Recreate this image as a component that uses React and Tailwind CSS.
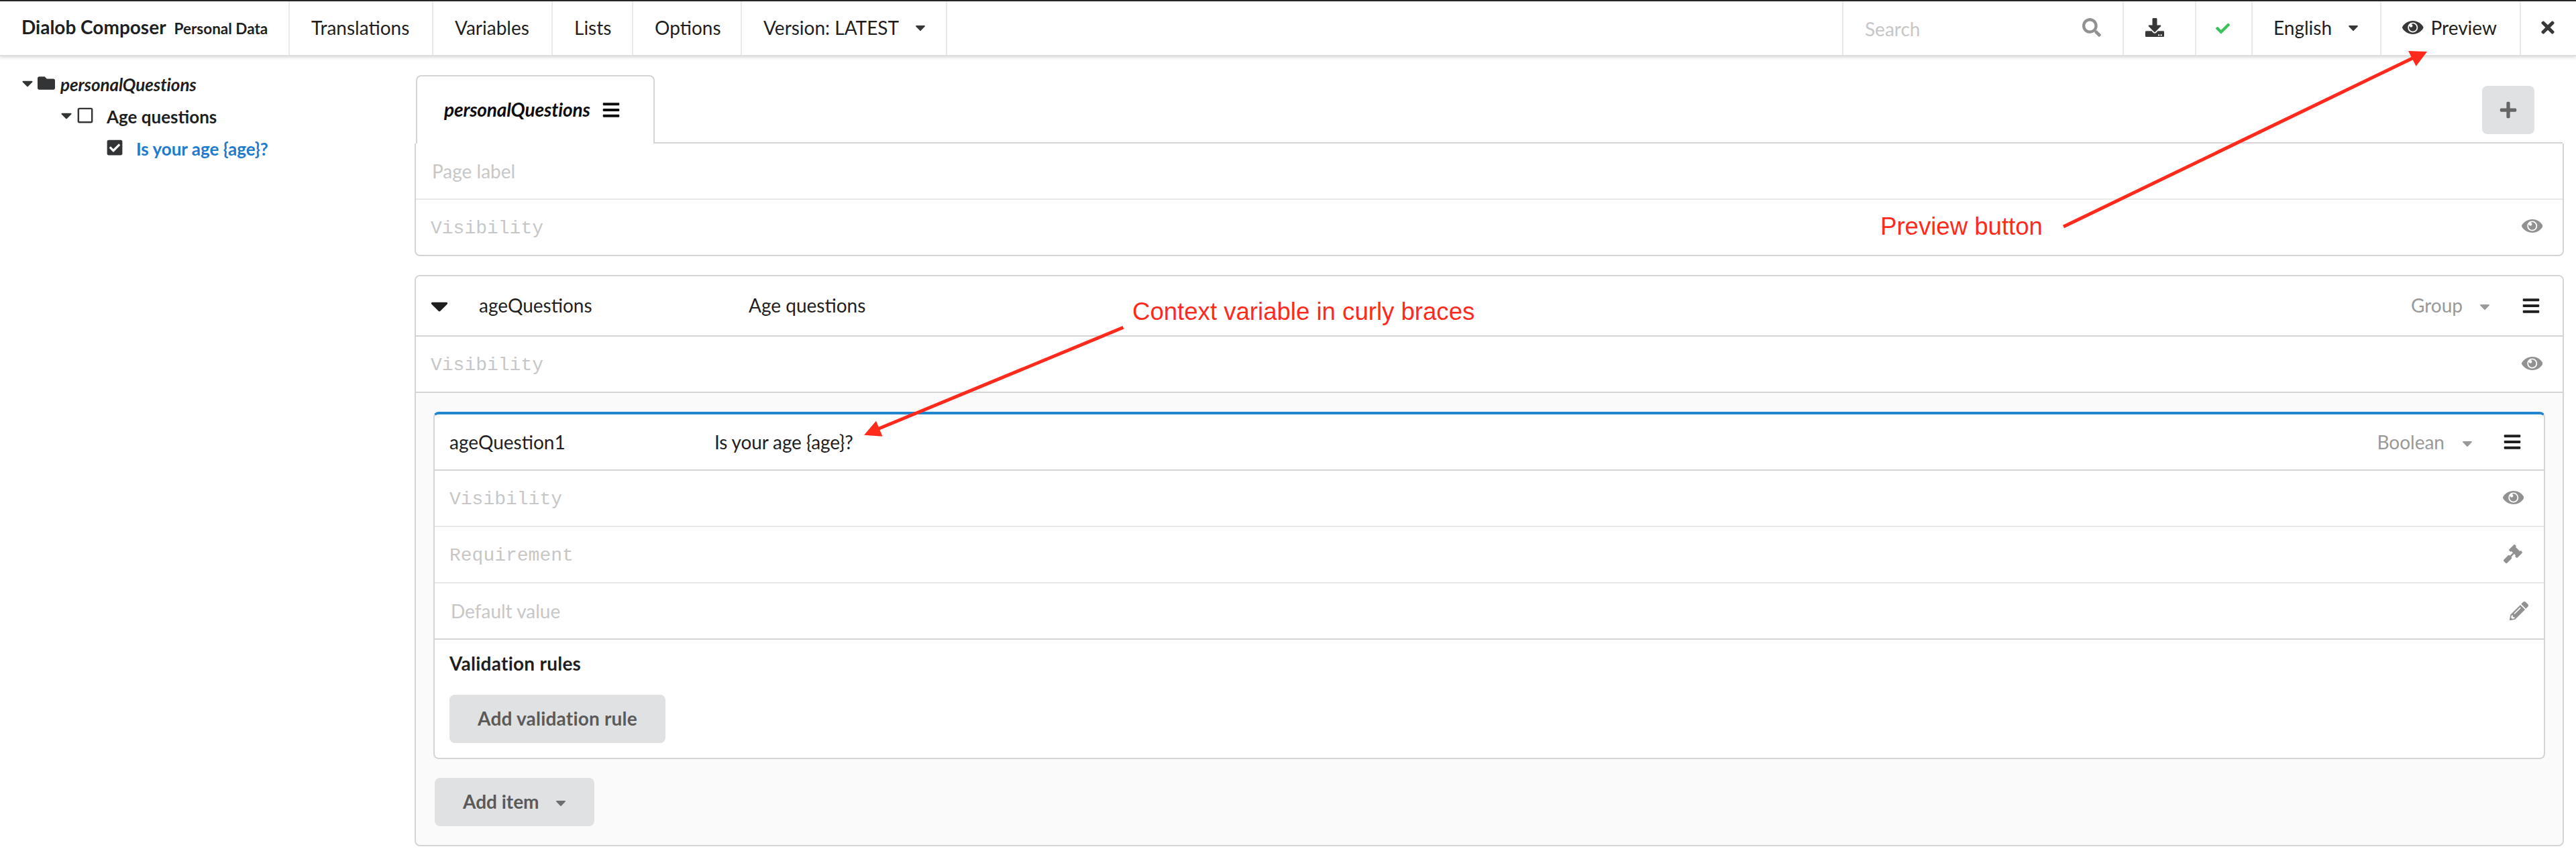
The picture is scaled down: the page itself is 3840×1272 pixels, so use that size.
import React from "react";
import {
  FaBars,
  FaCaretDown,
  FaCheck,
  FaCheckSquare,
  FaDownload,
  FaFolder,
  FaGavel,
  FaPencilAlt,
  FaPlus,
  FaRegSquare,
  FaSearch,
  FaTimes,
} from "react-icons/fa";

function Eye({ className = "" }) {
  return (
    <svg viewBox="0 0 576 512" fill="currentColor" className={`h-7 w-[31.5px] shrink-0 ${className}`}>
      <path d="M569.354 231.631C512.969 135.949 407.81 72 288 72 168.14 72 63.004 135.994 6.646 231.631a47.999 47.999 0 0 0 0 48.739C63.031 376.051 168.19 440 288 440c119.86 0 224.996-63.994 281.354-159.631a47.997 47.997 0 0 0 0-48.738zM288 392c-75.162 0-136-60.827-136-136 0-75.162 60.826-136 136-136 75.162 0 136 60.826 136 136 0 75.162-60.826 136-136 136zm104-136c0 57.438-46.562 104-104 104s-104-46.562-104-104c0-17.708 4.431-34.379 12.236-48.973l-.001.032c0 23.651 19.173 42.823 42.824 42.823s42.824-19.173 42.824-42.823c0-23.651-19.173-42.824-42.824-42.824l-.032.001C253.621 156.431 270.292 152 288 152c57.438 0 104 46.562 104 104z" />
    </svg>
  );
}

function MenuBar() {
  return (
    <header className="flex h-[84px] shrink-0 items-stretch border-t-2 border-b-2 border-t-[#272526] border-b-[#dededf] bg-white shadow-[0_2px_4px_0_rgba(34,36,38,0.15)]">
      <div className="flex w-[432px] items-center border-r-2 border-[#e9e9e9] pb-[2px] pl-8">
        <div className="flex items-baseline gap-3 font-bold whitespace-nowrap">
          <span>Dialob Composer</span>
          <span className="text-[22.5px]">Personal Data</span>
        </div>
      </div>
      <div className="flex w-[214px] items-center border-r-2 border-[#e9e9e9] pb-[2px] pl-8">Translations</div>
      <div className="flex w-[178px] items-center border-r-2 border-[#e9e9e9] pb-[2px] pl-8">Variables</div>
      <div className="flex w-[120px] items-center border-r-2 border-[#e9e9e9] pb-[2px] pl-8">Lists</div>
      <div className="flex w-[162px] items-center border-r-2 border-[#e9e9e9] pb-[2px] pl-8">Options</div>
      <div className="flex w-[306px] items-center justify-between border-r-2 border-[#e9e9e9] pr-[26px] pb-[2px] pl-8">
        Version: LATEST
        <FaCaretDown className="size-6 text-[#383838]" />
      </div>
      <div className="ml-auto flex w-[418px] items-center justify-between border-l-2 border-[#e9e9e9] pr-[32px] pb-[2px] pl-8">
        <span className="pt-1 text-[#c7c7c7]">Search</span>
        <FaSearch className="size-7 text-[#919191]" />
      </div>
      <div className="flex w-[108px] items-center border-l-2 border-[#e9e9e9] pb-[2px] pl-8">
        <FaDownload className="size-7 text-[#383838]" />
      </div>
      <div className="flex w-[84px] items-center border-l-2 border-[#e9e9e9] pl-[29px]">
        <FaCheck className="size-[21px] text-[#3ac25a]" />
      </div>
      <div className="flex w-[192px] items-center justify-between border-l-2 border-[#e9e9e9] pr-[28px] pb-[2px] pl-[31px]">
        English
        <FaCaretDown className="size-6 text-[#383838]" />
      </div>
      <div className="flex w-[208px] items-center gap-[11px] border-l-2 border-[#e9e9e9] pb-[2px] pl-[31px]">
        <Eye className="text-[#383838]" />
        Preview
      </div>
      <div className="flex w-[84px] items-center border-l-2 border-[#e9e9e9] pb-[2px] pl-[26px]">
        <FaTimes className="size-7 text-[#383838]" />
      </div>
    </header>
  );
}

function Tree() {
  return (
    <nav className="flex w-[618px] shrink-0 flex-col pt-4 text-[26px] font-bold">
      <div className="flex h-12 items-center pl-[28px]">
        <FaCaretDown className="size-[26px] text-[#333436]" />
        <FaFolder className="ml-[2px] size-[26px] text-[#333436]" />
        <span className="pt-1 pl-2 tracking-[-0.1px] italic">personalQuestions</span>
      </div>
      <div className="flex h-12 items-center pl-[86px]">
        <FaCaretDown className="size-[26px] text-[#333436]" />
        <FaRegSquare className="ml-[1.5px] size-[26px] text-[#333436]" />
        <span className="pt-1 pl-[19.5px]">Age questions</span>
      </div>
      <div className="flex h-12 items-center pl-[158px]">
        <FaCheckSquare className="size-[26px] text-[#333436]" />
        <span className="pt-1 pl-[19px] text-[#1f7bcd]">{"Is your age {age}?"}</span>
      </div>
    </nav>
  );
}

function FieldRow({ label, mono, icon, className = "" }) {
  return (
    <div className={`flex shrink-0 items-center justify-between text-[#c7c7c7] ${className}`}>
      <span className={mono ? "pt-1 font-['Liberation_Mono',monospace]" : "pl-[2px]"}>{label}</span>
      {icon}
    </div>
  );
}

function PageTabs() {
  return (
    <div className="mx-[2px] flex h-[102px]">
      <div className="flex w-[356px] items-center gap-[17px] rounded-t-lg border-2 border-b-0 border-[#d4d4d5] bg-white pl-10">
        <span className="pb-[2px] font-bold tracking-[-0.15px] text-[#0d0d0d] italic">personalQuestions</span>
        <FaBars className="size-7 text-[#0d0d0d]" />
      </div>
      <div className="flex flex-1 items-start justify-end border-b-2 border-[#d4d4d5] pt-4 pr-[42px]">
        <button className="flex h-[72px] w-[78px] items-center justify-center rounded-lg bg-[#e0e1e2] text-[#666667]">
          <FaPlus className="size-7" />
        </button>
      </div>
    </div>
  );
}

function Question() {
  return (
    <section className="rounded-lg border-2 border-t-4 border-[#d4d4d5] border-t-[#2185d0] bg-white">
      <div className="flex h-[84px] items-center border-b-2 border-[#d4d4d5] pr-[33px] pl-[22px]">
        <span className="w-[395px]">ageQuestion1</span>
        <span className="tracking-[-0.15px]">{"Is your age {age}?"}</span>
        <span className="ml-auto text-[#999999]">Boolean</span>
        <FaCaretDown className="mt-1 ml-[22px] size-6 text-[#999999]" />
        <FaBars className="ml-[41px] size-7 text-[#1f1f1f]" />
      </div>
      <FieldRow
        label="Visibility"
        mono
        icon={<Eye className="mb-[3px] text-[#919191]" />}
        className="h-[84px] border-b-2 border-[#e8e8e9] pr-[30px] pl-[22px]"
      />
      <FieldRow
        label="Requirement"
        mono
        icon={<FaGavel className="mb-[3px] size-7 text-[#919191]" />}
        className="h-[84px] border-b-2 border-[#e8e8e9] pr-[32px] pl-[22px]"
      />
      <FieldRow
        label="Default value"
        icon={<FaPencilAlt className="size-7 text-[#919191]" />}
        className="h-[84px] border-b-2 border-[#d4d4d5] pr-[23px] pl-[22px]"
      />
      <div className="flex h-[176px] flex-col items-start pt-[15px] pl-[22px]">
        <h3 className="leading-10 font-bold tracking-[0.25px]">Validation rules</h3>
        <button className="mt-[27px] flex h-[72px] w-[322px] shrink-0 items-center justify-center rounded-lg bg-[#e0e1e2] pb-[2px] font-bold tracking-[0.2px] text-[#5a5a5b]">
          Add validation rule
        </button>
      </div>
    </section>
  );
}

function Group() {
  return (
    <section className="mt-7 flex h-[852px] flex-col overflow-hidden rounded-lg border-2 border-[#d4d4d5] bg-[#fafafa]">
      <div className="flex h-[90px] shrink-0 items-center border-b-2 border-[#d4d4d5] bg-white pr-[33px]">
        <FaCaretDown className="mr-[38px] ml-[14px] size-[42px] text-[#1f1f1f]" />
        <span className="w-[402px] pb-[2px]">ageQuestions</span>
        <span className="pb-[2px]">Age questions</span>
        <span className="ml-auto pb-[2px] text-[#999999]">Group</span>
        <FaCaretDown className="mt-[2px] ml-[21px] size-6 text-[#999999]" />
        <FaBars className="ml-[43px] size-7 text-[#1f1f1f]" />
      </div>
      <FieldRow
        label="Visibility"
        mono
        icon={<Eye className="mb-[3px] text-[#919191]" />}
        className="h-[84px] border-b-2 border-[#d4d4d5] bg-white pr-[30px] pl-[22px]"
      />
      <div className="flex flex-col items-start gap-7 px-[26px] pt-7">
        <div className="w-full">
          <Question />
        </div>
        <button className="ml-[2px] flex h-[72px] w-[238px] items-center rounded-lg bg-[#e0e1e2] pb-[2px] pl-[42px] font-bold text-[#5a5a5b]">
          Add item
          <FaCaretDown className="mt-1 ml-[20px] size-6 text-[#6e6e6f]" />
        </button>
      </div>
    </section>
  );
}

function Annotations() {
  return (
    <div className="pointer-events-none absolute inset-0 font-['Liberation_Sans',sans-serif] text-[36.6px] leading-10 whitespace-nowrap text-[#ff2a1c]">
      <svg viewBox="0 0 3840 1272" className="absolute inset-0 size-full" fill="#ff2a1c" stroke="#ff2a1c">
        <line x1="3076" y1="338" x2="3598" y2="86" strokeWidth="5" />
        <path d="M3618 77 3590 76 3601.6 98.7Z" stroke="none" />
        <line x1="1674.5" y1="488.3" x2="1308" y2="640" strokeWidth="5" />
        <path d="M1288 648.7 1306 627.7 1315.5 650.7Z" stroke="none" />
      </svg>
      <span className="absolute top-[318px] left-[2803px]">Preview button</span>
      <span className="absolute top-[445px] left-[1688px]">Context variable in curly braces</span>
    </div>
  );
}

export default function App() {
  return (
    <div className="relative flex h-[1272px] w-[3840px] flex-col overflow-hidden bg-white font-[Lato,sans-serif] text-[28px] leading-10 text-[#1f1f1f]">
      <MenuBar />
      <div className="flex flex-1">
        <Tree />
        <main className="w-[3204px] pt-7">
          <PageTabs />
          <section className="rounded-b-lg border-2 border-t-0 border-[#d4d4d5]">
            <FieldRow label="Page label" icon={null} className="h-[84px] border-b-2 border-[#e8e8e9] pr-[30px] pl-[22px]" />
            <FieldRow
              label="Visibility"
              mono
              icon={<Eye className="mb-1 text-[#919191]" />}
              className="h-[82px] pr-[30px] pl-[22px]"
            />
          </section>
          <Group />
        </main>
      </div>
      <Annotations />
    </div>
  );
}
